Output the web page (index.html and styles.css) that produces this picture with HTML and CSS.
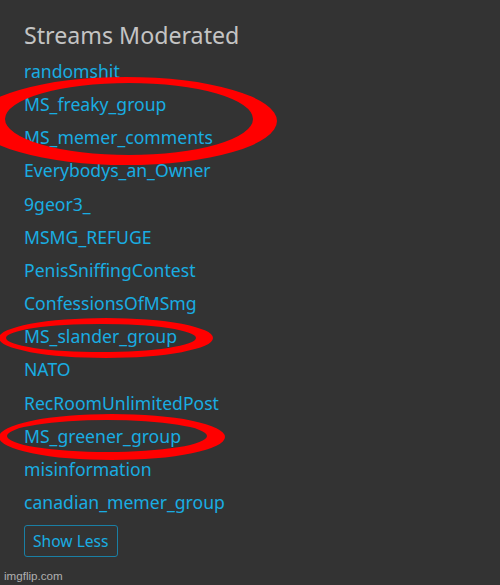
FILE: index.html
```html
<!DOCTYPE html>
<html lang="en">

<head>
    <meta charset="UTF-8">
    <meta name="viewport" content="width=device-width, initial-scale=1.0">
    <link rel="stylesheet" href="styles.css">
    <title>Streams Moderated</title>
</head>

<body>
    <div class="panel">
        <h2 class="panel-title">Streams Moderated</h2>
        <ul class="stream-list">
            <li><a href="javascript:;">randomshit</a></li>
            <li><a href="javascript:;">MS_freaky_group</a></li>
            <li><a href="javascript:;">MS_memer_comments</a></li>
            <li><a href="javascript:;">Everybodys_an_Owner</a></li>
            <li><a href="javascript:;">9geor3_</a></li>
            <li><a href="javascript:;">MSMG_REFUGE</a></li>
            <li><a href="javascript:;">PenisSniffingContest</a></li>
            <li><a href="javascript:;">ConfessionsOfMSmg</a></li>
            <li><a href="javascript:;">MS_slander_group</a></li>
            <li><a href="javascript:;">NATO</a></li>
            <li><a href="javascript:;">RecRoomUnlimitedPost</a></li>
            <li><a href="javascript:;">MS_greener_group</a></li>
            <li><a href="javascript:;">misinformation</a></li>
            <li><a href="javascript:;">canadian_memer_group</a></li>
        </ul>
        <button class="show-btn">Show Less</button>
    </div>

    <!-- red marker circles drawn over the list -->
    <svg class="marks" width="500" height="585" viewBox="0 0 500 585">
        <path fill="#ff0000" fill-rule="evenodd"
            d="M-25 121 a151 44 0 1 0 302 0 a151 44 0 1 0 -302 0 Z
               M5 119 a124 36 0 1 0 248 0 a124 36 0 1 0 -248 0 Z" />
        <path fill="#ff0000" fill-rule="evenodd"
            d="M-1 338 a107 20 0 1 0 214 0 a107 20 0 1 0 -214 0 Z
               M6 338 a95 14 0 1 0 190 0 a95 14 0 1 0 -190 0 Z" />
        <path fill="#ff0000" fill-rule="evenodd"
            d="M-1 437 a113 23 0 1 0 226 0 a113 23 0 1 0 -226 0 Z
               M7 436 a100 16 0 1 0 200 0 a100 16 0 1 0 -200 0 Z" />
    </svg>

    <div class="watermark">imgflip.com</div>
</body>

</html>
```

FILE: styles.css
```css
html,
body {
    margin: 0;
    height: 100%;
}

body {
    position: relative;
    overflow: hidden;
    background-color: #333333;
    font-family: "Noto Sans", "Open Sans", sans-serif;
}

a {
    text-decoration: none;
    color: #19ade2;
}

.panel {
    padding: 20px 24px 0;
}

.panel-title {
    margin: 0 0 5px;
    font-size: 23.2px;
    line-height: 30px;
    font-weight: normal;
    color: #c4c4c4;
}

.stream-list {
    margin: 0;
    padding: 0;
    list-style: none;
}

.stream-list li {
    font-size: 17.6px;
    line-height: 33.15px;
}

.show-btn {
    margin-top: 6px;
    height: 32px;
    padding: 0 8px;
    border: 1px solid #1a7fa4;
    border-radius: 3px;
    background: transparent;
    color: #19ade2;
    font-family: inherit;
    font-size: 15.6px;
    cursor: pointer;
}

.marks {
    position: absolute;
    top: 0;
    left: 0;
    pointer-events: none;
}

.watermark {
    position: absolute;
    left: 4px;
    bottom: 3px;
    font-family: "Liberation Sans", Arial, sans-serif;
    font-size: 11.6px;
    color: #b0b0b0;
}
```
